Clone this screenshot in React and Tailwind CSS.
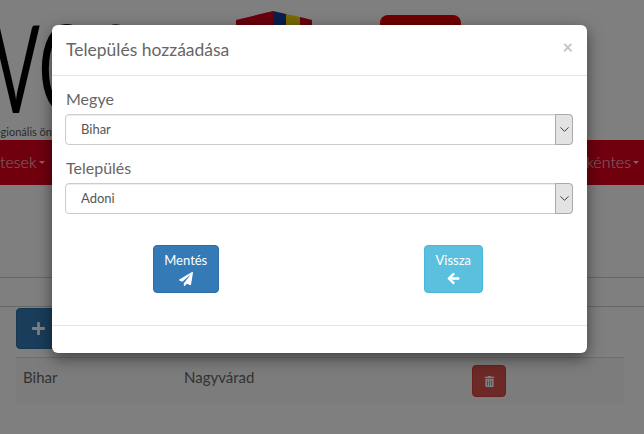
import React from "react";
import { ChevronDown } from "lucide-react";
import { FaArrowLeft, FaPaperPlane, FaPlus, FaTrashAlt } from "react-icons/fa";

const SelectField = ({ label, value, className = "" }) => (
  <div className={className}>
    <label className="block h-[26px] pl-px text-[16px] leading-[22px] text-[#666]">
      {label}
    </label>
    <div className="relative h-[31px]">
      <select
        defaultValue={value}
        className="h-full w-full appearance-none rounded border border-[#ccc] bg-white pl-[15px] text-[13px] text-[#555] shadow-[inset_0_1px_1px_rgba(0,0,0,0.075)]"
      >
        <option>{value}</option>
      </select>
      <span className="pointer-events-none absolute top-0 right-0 flex h-full w-[18px] items-center justify-center rounded-r border border-[#aaa] bg-[#e3e3e3]">
        <ChevronDown size={15} strokeWidth={1.5} className="text-[#333]" />
      </span>
    </div>
  </div>
);

const App = () => {
  return (
    <div className="relative h-[434px] w-[644px] overflow-hidden bg-white font-['Lato',sans-serif] text-[#555]">
      {/* Page behind the modal */}
      <header className="flex h-[140px]">
        <div className="w-[236px] shrink-0 overflow-hidden">
          <div className="ml-[-8px] h-[116px] origin-top-left scale-x-[0.58] pt-[8px] text-[122px] leading-[116px] font-normal whitespace-nowrap text-black">
            VOS
          </div>
          <p className="ml-[-9px] h-[24px] text-[11px] leading-[32px] whitespace-nowrap">
            regionális önkormányzat
          </p>
        </div>
        <svg width="76" height="30" viewBox="0 0 76 30" className="mt-[11px] shrink-0">
          <path d="M0 9 L37 0 L37 30 L0 30 Z" fill="#d0001a" />
          <path d="M37 0 L50 3 L50 30 L37 30 Z" fill="#123f9c" />
          <path d="M50 3 L64 6 L64 30 L50 30 Z" fill="#f0d00a" />
          <path d="M64 6 L76 9 L76 30 L64 30 Z" fill="#d0001a" />
        </svg>
        <div className="mt-[15px] ml-[68px] h-[40px] w-[81px] rounded-lg bg-[#e00000] pt-[7px] text-center text-[11px] text-white">
          Bihar
        </div>
      </header>

      <nav className="flex h-[45px] items-center justify-between bg-[#e0001c] pr-[5px] pb-[2px] text-[16px] font-light text-white/80">
        <span className="flex items-center gap-[2px]">
          tesek
          <span className="mt-[2px] border-x-[3px] border-t-[3px] border-x-transparent border-t-current" />
        </span>
        <span className="flex items-center gap-[2px]">
          Önkéntes
          <span className="mt-[2px] border-x-[3px] border-t-[3px] border-x-transparent border-t-current" />
        </span>
      </nav>

      <div className="mt-[92px] h-[30px] border-y border-[#ccc]" />

      <main className="mt-px mr-[20px] ml-[16px]">
        <button className="flex h-[41px] w-[56px] items-center rounded border border-[#2e6da4] bg-[#337ab7] pl-[14px] text-white">
          <FaPlus size={15} />
        </button>
        <div className="mt-[8px] flex h-[46px] items-start border-t border-[#ddd] bg-[#f9f9f9] pl-[7px] text-[15px] text-[#666]">
          <span className="mt-[8px] w-[161px]">Bihar</span>
          <span className="mt-[8px] w-[288px]">Nagyvárad</span>
          <button className="mt-[7px] flex h-[32px] w-[34px] items-center justify-center rounded border border-[#d43f3a] bg-[#d9534f] text-white">
            <FaTrashAlt size={11} />
          </button>
        </div>
      </main>

      {/* Backdrop and modal */}
      <div className="absolute inset-0 bg-black/50 pt-[25px] pl-[52px]">
        <div className="h-[328px] w-[535px] rounded-md bg-white shadow-[0_5px_15px_rgba(0,0,0,0.5)]">
          <div className="flex h-[51px] items-start justify-between border-b border-[#e5e5e5] pr-[14px] pl-[14px]">
            <h4 className="pt-[14px] text-[17.5px] leading-[22px] text-[#666]">
              Település hozzáadása
            </h4>
            <span className="pt-[12px] pr-[-1px] text-[18px] leading-[20px] font-bold text-[#c4c4c4]">
              ×
            </span>
          </div>

          <div className="h-[250px] border-b border-[#e5e5e5]">
            <div className="pr-[14px] pl-[13px] pt-[12px]">
              <SelectField label="Megye" value="Bihar" />
              <SelectField label="Település" value="Adoni" className="mt-[12px]" />
            </div>
            <div className="mt-[31px] grid grid-cols-2">
              <div className="flex justify-center">
                <button className="flex h-[48px] w-[66px] flex-col items-center justify-center gap-[4px] rounded border border-[#2e6da4] bg-[#337ab7] text-[13px] leading-[15px] text-white">
                  Mentés
                  <FaPaperPlane size={14} />
                </button>
              </div>
              <div className="flex justify-center">
                <button className="flex h-[48px] w-[59px] flex-col items-center justify-center gap-[4px] rounded border border-[#46b8da] bg-[#5bc0de] text-[13px] leading-[15px] text-white">
                  Vissza
                  <FaArrowLeft size={13} className="stroke-white stroke-[24px]" />
                </button>
              </div>
            </div>
          </div>
        </div>
      </div>
    </div>
  );
};

export default App;
